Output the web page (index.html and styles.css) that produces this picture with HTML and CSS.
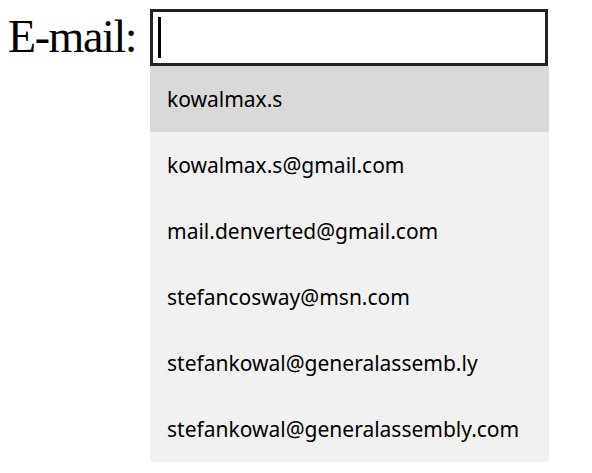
FILE: index.html
```html
<!DOCTYPE html>
<html>
<head>
<meta charset="utf-8">
<link rel="stylesheet" href="styles.css">
</head>
<body>
<div class="row">
  <label class="label" for="email">E-mail:</label>
  <div class="combo">
    <div class="field"><span class="caret"></span></div>
    <ul class="list">
      <li class="item active">kowalmax.s</li>
      <li class="item">kowalmax.s@gmail.com</li>
      <li class="item">mail.denverted@gmail.com</li>
      <li class="item">stefancosway@msn.com</li>
      <li class="item">stefankowal@generalassemb.ly</li>
      <li class="item">stefankowal@generalassembly.com</li>
    </ul>
  </div>
</div>
</body>
</html>
```
FILE: styles.css
```css
html, body { margin: 0; padding: 0; background: #fff; }
body { padding: 9px 0 0 8px; }
.row { display: flex; align-items: flex-start; }
.label {
  font-family: "Liberation Serif", "Times New Roman", serif;
  font-size: 46px;
  letter-spacing: -1.4px;
  line-height: 55px;
  color: #000;
  width: 142px;
}
.combo { width: 399px; }
.field {
  box-sizing: border-box;
  width: 398px;
  height: 57px;
  border: 3px solid #222;
  background: #fff;
  padding: 5px 0 0 5px;
}
.caret { display: block; width: 3px; height: 41px; background: #000; }
.list { list-style: none; margin: 0; padding: 0; }
.item {
  height: 66px;
  box-sizing: border-box;
  padding-left: 17px;
  display: flex;
  align-items: center;
  background: #f1f1f1;
  font-family: "Noto Sans", "Open Sans", sans-serif;
  font-size: 21px;
  color: #000;
}
.item.active { background: #d9d9d9; }
```
